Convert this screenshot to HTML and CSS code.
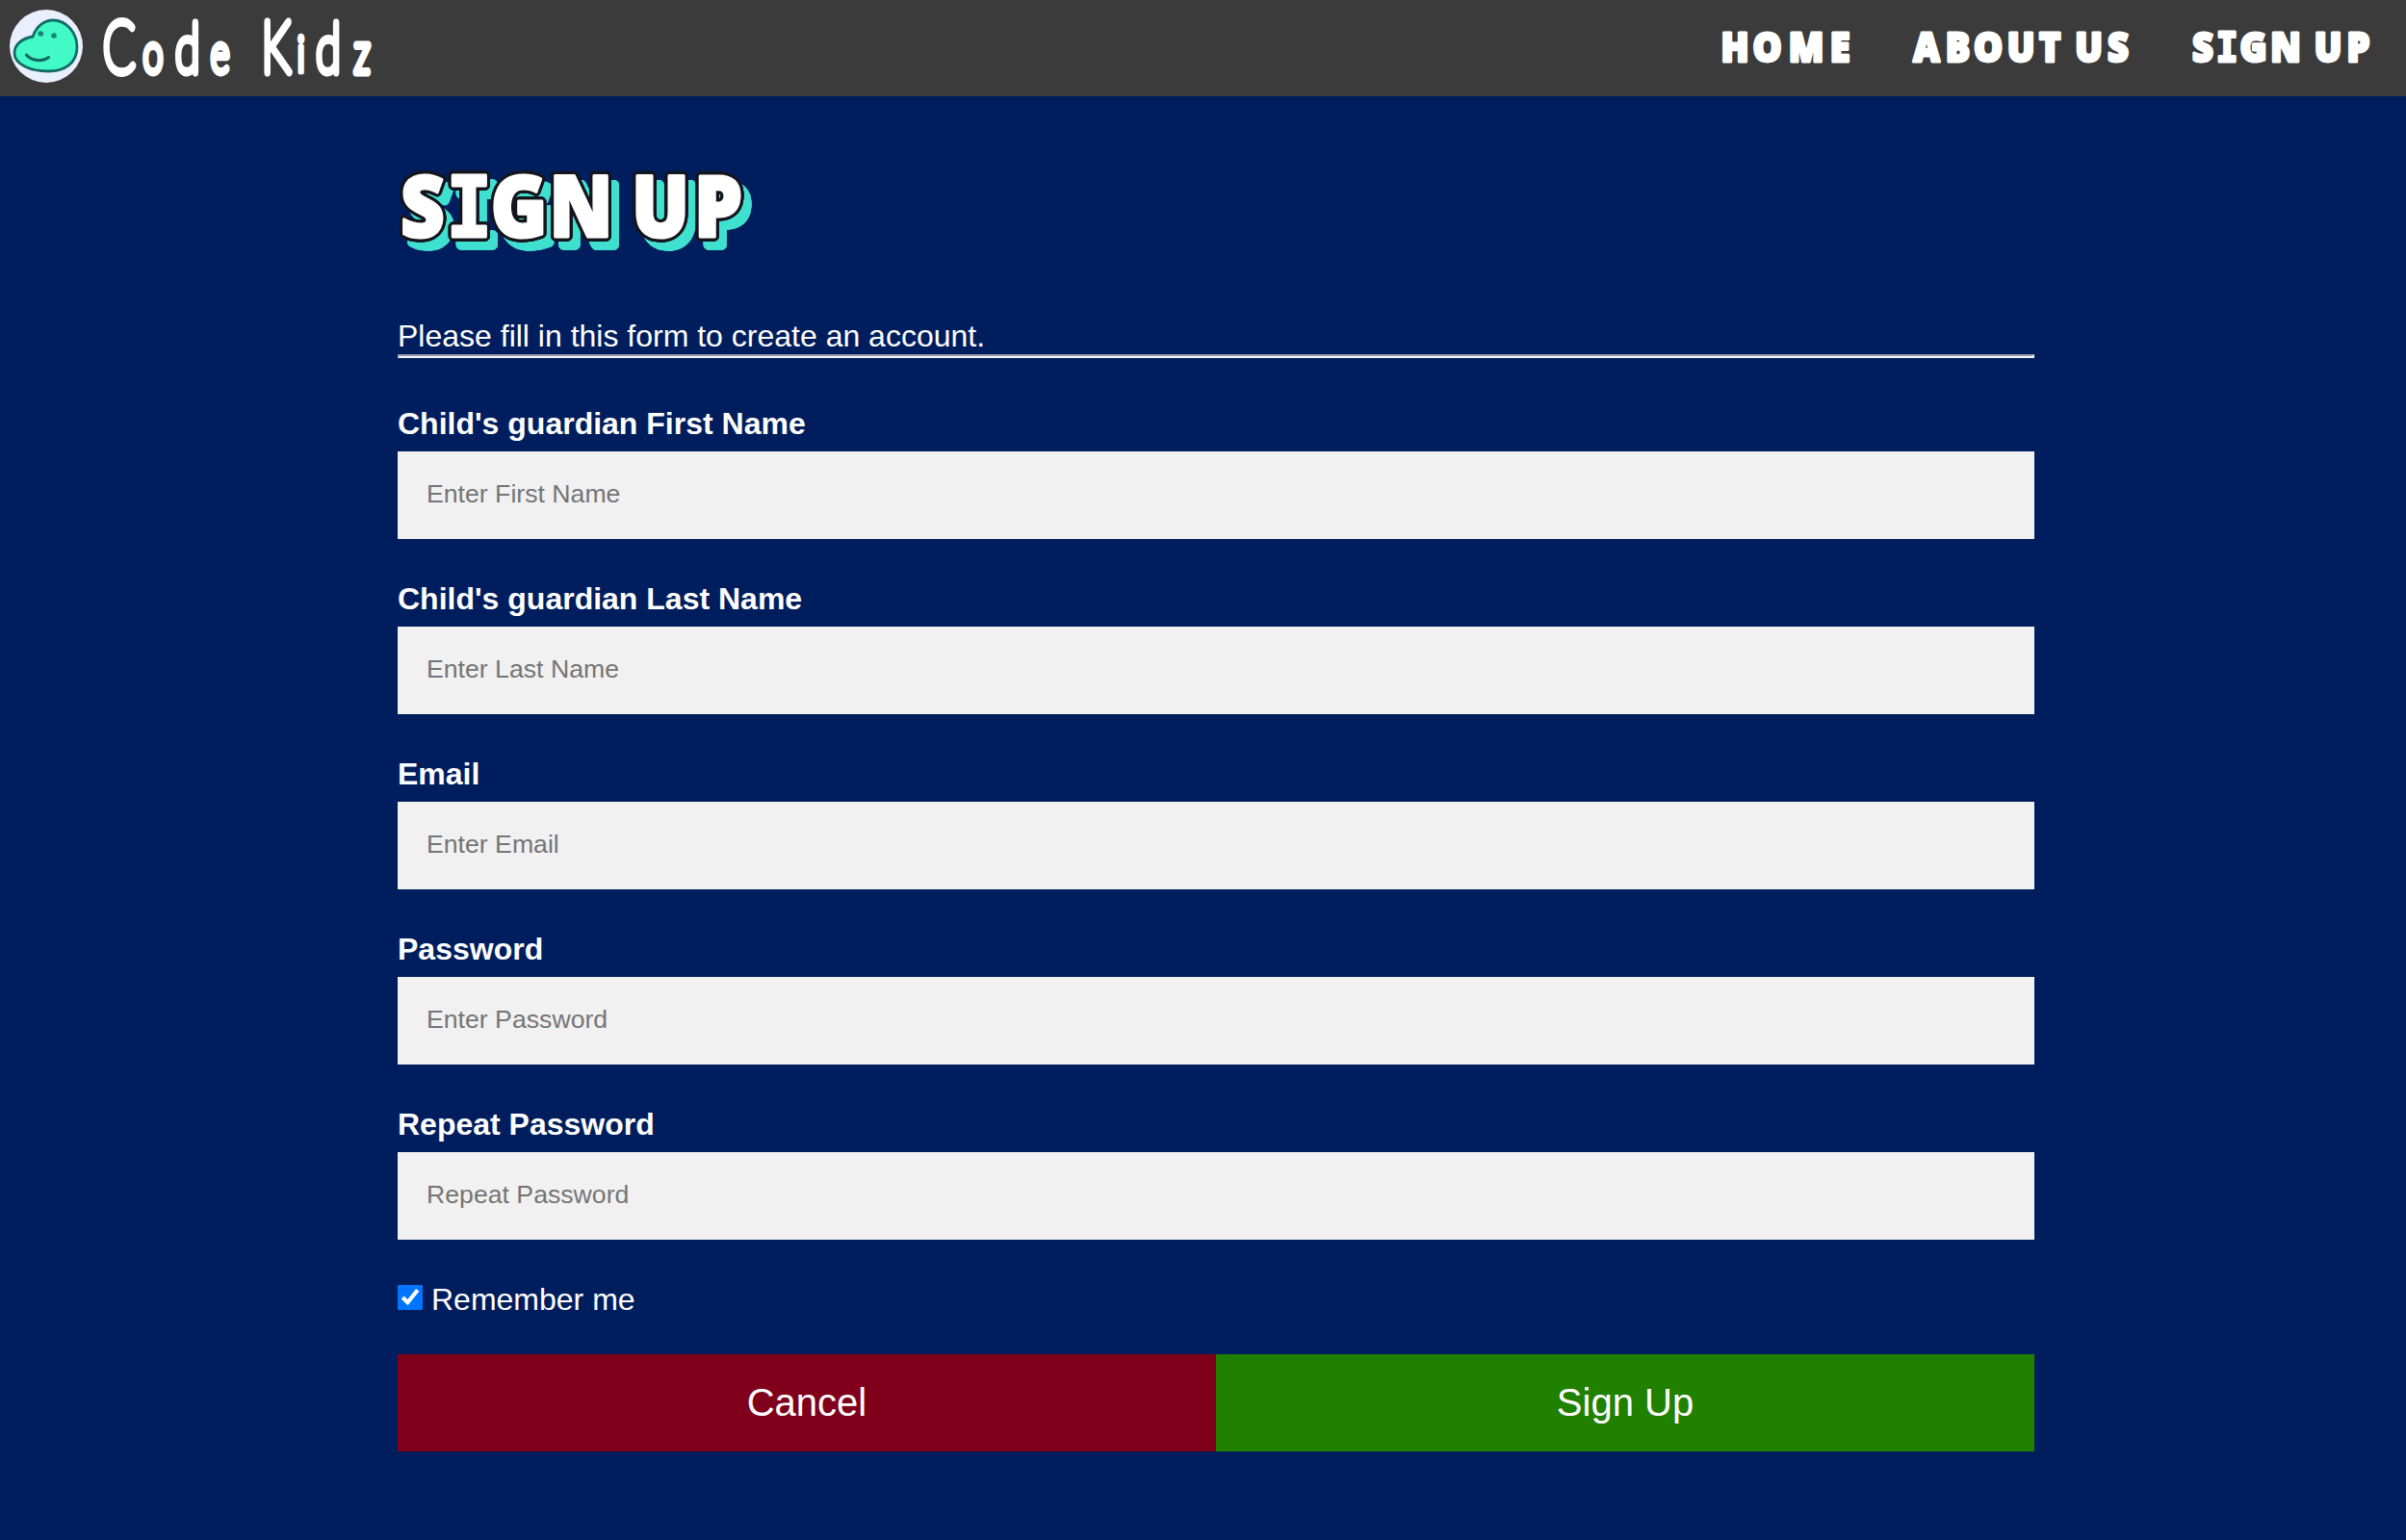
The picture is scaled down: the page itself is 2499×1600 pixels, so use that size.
FILE: index.html
```html
<!DOCTYPE html>
<html lang="en">
<head>
<meta charset="utf-8">
<title>Code Kidz - Sign Up</title>
<link rel="stylesheet" href="styles.css">
</head>
<body>
<header class="topbar">
  <a class="brand">
    <svg class="logo" viewBox="0 0 76 76">
      <circle cx="38" cy="38" r="38" fill="#e9effc"/>
      <path d="M24 28C28 17 36 11 45 11C59 11 70 24 70 39C70 56 57 64 40 64C22 64 5 57 5 45C5 36 13 30 24 28Z" fill="#42fac6" stroke="#126b68" stroke-width="2.8"/>
      <circle cx="32.300" cy="25" r="2.800" fill="#168477"/>
      <circle cx="46" cy="27" r="2.800" fill="#168477"/>
      <path d="M17.500 47C23 54 35 54 40.500 49.500" fill="none" stroke="#11665f" stroke-width="3" stroke-linecap="round"/>
    </svg>
    <svg class="wordmark" viewBox="0 0 300 100"><text transform="scale(.66 1)" y="75.500" x="36 89.400 143.500 194.700 235 283 322 365 418.200"><tspan class="tall">C</tspan><tspan class="low">o</tspan><tspan class="mid">d</tspan><tspan class="low">e </tspan><tspan class="tall">K</tspan><tspan class="dot">i</tspan><tspan class="mid">d</tspan><tspan class="low">z</tspan></text></svg>
  </a>
  <nav class="menu">
    <a><svg width="140" height="100"><text transform="scale(.9 1)" y="64.500" x="18.900 56.100 101.100 140">HOME</text></svg></a>
    <a><svg width="232" height="100"><text transform="scale(.9 1)" y="64.500" x="20 56.100 91.100 128.900 162.300 184 207.200 241.100">ABOUT US</text></svg></a>
    <a><svg width="192" height="100"><text transform="scale(.9 1)" y="64.500" x="16.600 44.500 75 112.200 133 161.100 196.100">S<tspan class="slab">I</tspan>GN UP</text></svg></a>
  </nav>
</header>
<main>
  <form class="signup">
    <h1><svg width="390" height="110"><text transform="scale(.9 1)" y="86" x="28.600 82.600 140 211.600 255 303.400 370">S<tspan class="slab">I</tspan>GN UP</text></svg></h1>
    <p class="intro">Please fill in this form to create an account.</p>
    <hr>
    <label class="field"><b>Child's guardian First Name</b><input type="text" placeholder="Enter First Name"></label>
    <label class="field"><b>Child's guardian Last Name</b><input type="text" placeholder="Enter Last Name"></label>
    <label class="field"><b>Email</b><input type="text" placeholder="Enter Email"></label>
    <label class="field"><b>Password</b><input type="password" placeholder="Enter Password"></label>
    <label class="field"><b>Repeat Password</b><input type="password" placeholder="Repeat Password"></label>
    <label class="remember"><input type="checkbox" checked><span>Remember me</span></label>
    <div class="actions"><button type="button" class="cancel">Cancel</button><button type="button" class="submit">Sign Up</button></div>
  </form>
</main>
</body>
</html>
```
FILE: styles.css
```css
* { box-sizing: border-box; }
body {
  margin: 0;
  min-height: 1600px;
  background: #001e5d;
  color: #fff;
  font: 32px/36px "Liberation Sans", Arial, sans-serif;
}
svg { display: block; overflow: visible; }
.topbar {
  display: flex;
  justify-content: space-between;
  height: 100px;
  padding: 0 34px 0 10px;
  background: #3b3b3b;
}
.brand { display: flex; }
.logo { width: 76px; height: 76px; margin-top: 10px; }
.wordmark { width: 300px; height: 100px; margin-left: 14px; }
.wordmark text {
  font-family: Lato, sans-serif;
  font-weight: 100;
  text-anchor: middle;
  fill: #fff;
}
.wordmark text, .wordmark tspan {
  stroke: #fff;
  stroke-width: 7.5px;
  stroke-linejoin: round;
  stroke-linecap: round;
  vector-effect: non-scaling-stroke;
}
.tall { font-size: 74px; }
.mid { font-size: 71px; }
.low { font-size: 56px; }
.wordmark .dot { font-size: 52px; font-weight: 400; stroke-width: 4px; }
.menu { display: flex; gap: 58px; }
.menu text {
  font: 800 42px "Open Sans", sans-serif;
  text-anchor: middle;
  fill: #fff;
  stroke: #fff;
  stroke-width: 3px;
  stroke-linejoin: round;
}
.slab { font-family: "DejaVu Sans Mono", monospace; font-weight: bold; }
.signup { display: flex; flex-direction: column; width: 1700px; margin-left: 413px; }
h1 { margin: 60px 0 0; height: 110px; }
/* dark rim built up one pixel at a time, then the offset turquoise copy */
h1 svg {
  filter:
    drop-shadow(1px 0 0 #15151d) drop-shadow(-1px 0 0 #15151d)
    drop-shadow(0 1px 0 #15151d) drop-shadow(0 -1px 0 #15151d)
    drop-shadow(1px 1px 0 #15151d) drop-shadow(-1px -1px 0 #15151d)
    drop-shadow(1px -1px 0 #15151d) drop-shadow(-1px 1px 0 #15151d)
    drop-shadow(8px 9px 0 #40e0d0);
}
h1 text {
  font: 800 88px "Open Sans", sans-serif;
  text-anchor: middle;
  fill: #fff;
  stroke: #fff;
  stroke-width: 3px;
  stroke-linejoin: round;
}
.intro { margin: 61px 0 0; height: 37px; }
hr {
  width: 100%;
  height: 4px;
  margin: 0 0 47px;
  border: 2px solid;
  border-color: #9499ab #f0f5fb #f0f5fb #9499ab;
}
.field { display: flex; flex-direction: column; height: 141px; margin-bottom: 41px; }
.field b { height: 50px; padding-top: 3px; }
.field input {
  height: 91px;
  padding: 0 30px 2px;
  border: 0;
  background: #f1f1f1;
  font: 26.670px "Liberation Sans", Arial, sans-serif;
}
.field input::placeholder { color: #757575; }
.remember { display: flex; height: 78px; gap: 9px; }
.remember input { width: 26px; height: 26px; margin: 6px 0 0; accent-color: #0075ff; }
.remember span { padding-top: 3px; }
.actions { display: flex; height: 101px; }
.actions button {
  flex: 1;
  padding: 0;
  border: 0;
  color: #fff;
  font: 40px "Liberation Sans", Arial, sans-serif;
}
.cancel { background: #80001c; }
.submit { background: #208000; }
```
